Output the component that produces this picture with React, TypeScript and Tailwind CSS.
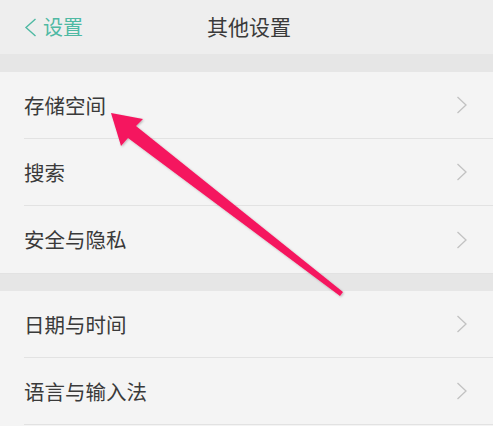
const font = { fontFamily: '"Noto Sans CJK SC", "Noto Sans", sans-serif' };

function Row({ label, last }: { label: string; last?: boolean }) {
  return (
    <div className="flex h-[67px] items-center pl-6">
      <div
        className={`flex h-full flex-1 items-center justify-between pr-[24px] ${last ? "" : "border-b border-[#e2e2e2]"}`}
      >
        <span className="text-[20.5px] text-[#3a3a3a]">{label}</span>
        <svg width="12" height="18" viewBox="0 0 12 18" className="mr-[1px]">
          <polyline points="1.5,1 10,9 1.5,17" fill="none" stroke="#c2c2c2" strokeWidth="1.3" />
        </svg>
      </div>
    </div>
  );
}

export default function App() {
  return (
    <div className="relative h-[426px] w-[493px] overflow-hidden bg-[#f4f4f4]" style={font}>
      <div className="relative flex h-[54px] items-center bg-[#eeeeee]">
        <div className="flex items-center gap-[6px] pl-[24px] text-[#4fb9a3]">
          <svg width="13" height="19" viewBox="0 0 13 19">
            <polyline points="11.5,1 2,9.5 11.5,18" fill="none" stroke="#4fb9a3" strokeWidth="1.4" />
          </svg>
          <span className="text-[20px]">设置</span>
        </div>
        <div className="absolute inset-0 flex items-center justify-center">
          <span className="pl-[5px] text-[21px] text-[#3a3a3a]">其他设置</span>
        </div>
      </div>
      <div className="h-[18px] bg-[#e6e6e6]" />
      <div className="border-b border-[#e2e2e2]">
        <Row label="存储空间" />
        <Row label="搜索" />
        <Row label="安全与隐私" last />
      </div>
      <div className="h-[17px] bg-[#e6e6e6]" />
      <div>
        <Row label="日期与时间" />
        <Row label="语言与输入法" />
      </div>

      <svg className="pointer-events-none absolute inset-0" width="493" height="426">
        <defs>
          <filter id="sh" x="-10%" y="-10%" width="120%" height="120%">
            <feDropShadow dx="1" dy="1" stdDeviation="1" floodColor="#000" floodOpacity="0.25" />
          </filter>
        </defs>
        <polygon
          points="111,113 143,119 136,126 343,292 340,296 128,138 121,146"
          fill="#f5175f"
          filter="url(#sh)"
        />
      </svg>
    </div>
  );
}
